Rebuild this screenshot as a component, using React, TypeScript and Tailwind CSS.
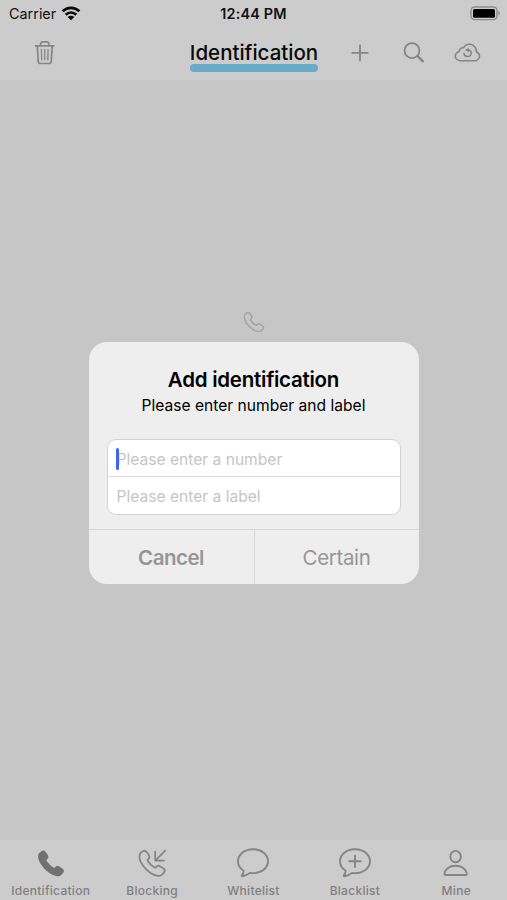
import React from 'react';

const PHONE_PATH =
    'M4.2 .8C5.5 .1 6.7 .5 7.6 1.7L10 5.1C10.9 6.4 10.7 7.4 9.8 8.3L8.8 9.3C8.4 9.7 8.400 10.2 8.700 10.7C9.9 12.9 13.3 16.3 15.6 17.5C16.1 17.8 16.6 17.7 17 17.3L18 16.4C18.9 15.5 19.9 15.4 21.1 16.2L24.8 18.600C26.2 19.6 26.5 20.8 25.6 22.1L24.1 24.1C22.8 25.8 20.6 26.5 18.1 25.9C10.5 24.2 1.9 15.7 .3 8C-.2 5.3 .7 3 2.6 1.700Z';

const BUBBLE_PATH =
    'M17 1.3C25.4 1.3 32 6.4 32 13.200C32 20 25.400 25.100 17 25.100C16 25.100 15 25 14 24.900C11.900 26.700 9.100 28 6.300 28.200C5.700 28.200 5.600 27.700 5.900 27.300C7 26 7.600 24.400 7.600 22.700C4.200 20.500 2 17.200 2 13.200C2 6.400 8.600 1.300 17 1.300Z';

const WifiIcon = () => (
    <svg className="h-[15px] w-[20px]" viewBox="0 0 20 15" fill="none" stroke="#0b0b0b" strokeWidth="2.7">
        <path d="M1.6 5.3C6.4 .6 13.6 .6 18.4 5.3" />
        <path d="M4.7 8.8C7.8 5.9 12.2 5.9 15.3 8.8" />
        <path d="M10 14.2L6.7 11C8.500 9.300 11.500 9.300 13.300 11Z" fill="#0b0b0b" stroke="none" />
    </svg>
);

const BatteryIcon = () => (
    <svg className="h-[15px] w-[32px]" viewBox="0 0 32 15">
        <rect x="2" y="1" width="26" height="12.6" rx="3.6" fill="none" stroke="#8c8c8c" strokeWidth="1.4" />
        <rect x="4" y="2.9" width="22" height="8.900" rx="1.6" fill="#000" />
        <path d="M29.4 5C31.400 6 31.400 8.600 29.400 9.600Z" fill="#8c8c8c" />
    </svg>
);

const TrashIcon = () => (
    <svg className="h-[26px] w-[22px]" viewBox="0 0 22 26" fill="none" stroke="#868686" strokeWidth="1.7" strokeLinecap="round" strokeLinejoin="round">
        <path d="M1.700 5.900H19.800M6.700 5.700V4C6.700 2.700 7.500 1.900 8.800 1.900H12.700C14 1.900 14.800 2.700 14.800 4V5.700" />
        <path d="M3.300 6.100L4.200 21.200C4.300 22.700 5.200 23.500 6.600 23.500H14.900C16.300 23.500 17.200 22.700 17.300 21.200L18.200 6.100" />
        <path d="M7.400 9.300L7.700 19.800M10.750 9.300V19.800M14.100 9.300L13.800 19.800" strokeWidth="1.3" />
    </svg>
);

const PlusIcon = () => (
    <svg className="h-[18px] w-[18px]" viewBox="0 0 18 18" fill="none" stroke="#858585" strokeWidth="1.8" strokeLinecap="round">
        <path d="M9 1.100V16.500M1.300 8.800H16.700" />
    </svg>
);

const SearchIcon = () => (
    <svg className="h-[22px] w-[22px]" viewBox="0 0 22 22" fill="none" stroke="#858585" strokeLinecap="round">
        <circle cx="9" cy="8.6" r="7.5" strokeWidth="1.8" />
        <path d="M14.8 14.300L19.900 19.400" strokeWidth="2.300" />
    </svg>
);

const CloudIcon = () => (
    <svg className="h-[20px] w-[27px]" viewBox="0 0 27 20" fill="none" stroke="#858585" strokeWidth="1.6" strokeLinecap="round" strokeLinejoin="round">
        <path d="M6.700 17.700H20.400C23.400 17.700 25.500 15.700 25.500 13.200C25.500 11.200 24.400 9.700 22.600 9C22.500 4.600 19.500 1.300 15.500 1.300C12.700 1.300 10.700 2.700 9.500 4.800C7.100 4.300 5.300 6 5.100 8.500C2.900 9.300 1.300 11 1.300 13.300C1.300 15.900 3.600 17.700 6.700 17.700Z" />
        <path d="M14.300 6.900C16.300 7.100 17.300 8.700 17.200 10.200C17 12.200 15.500 13.500 13.500 13.500C11.600 13.500 10.100 12.200 10 10.300" strokeWidth="1.500" />
        <path d="M11.200 7.100L14.700 4.700V9.400Z" fill="#858585" stroke="none" />
    </svg>
);

const PhoneFilledIcon = () => (
    <svg className="h-[30px] w-[34px]" viewBox="0 0 34 30">
        <path d={PHONE_PATH} transform="translate(3.9 2.1)" fill="#707070" />
    </svg>
);

const BlockingIcon = () => (
    <svg className="h-[30px] w-[34px]" viewBox="0 0 34 30" fill="none" stroke="#858585" strokeLinecap="round" strokeLinejoin="round">
        <path d={PHONE_PATH} transform="translate(4.2 2.3) scale(.98)" strokeWidth="1.8" />
        <path d="M30.200 2.600L20.200 12.600M20.200 3.700V12.600H29" strokeWidth="1.7" />
    </svg>
);

const BubbleIcon = ({ plus = false }: { plus?: boolean }) => (
    <svg className="h-[30px] w-[34px]" viewBox="0 0 34 30" fill="none" stroke="#858585" strokeWidth="1.9" strokeLinecap="round" strokeLinejoin="round">
        <path d={BUBBLE_PATH} />
        {plus && <path d="M17 7.600V19M11.300 13.300H22.700" />}
    </svg>
);

const PersonIcon = () => (
    <svg className="h-[30px] w-[34px]" viewBox="0 0 34 30" fill="none" stroke="#858585" strokeWidth="1.9" strokeLinejoin="round">
        <ellipse cx="16.6" cy="8.600" rx="5.300" ry="5.700" />
        <path d="M6.600 27C5.700 27 5.300 26.500 5.400 25.600C6 21.200 10.500 17.800 16.600 17.800C22.700 17.800 27.200 21.200 27.800 25.600C27.900 26.500 27.500 27 26.600 27Z" />
    </svg>
);

const tabs = [
    { label: 'Identification', icon: <PhoneFilledIcon /> },
    { label: 'Blocking', icon: <BlockingIcon /> },
    { label: 'Whitelist', icon: <BubbleIcon /> },
    { label: 'Blacklist', icon: <BubbleIcon plus /> },
    { label: 'Mine', icon: <PersonIcon /> },
];

const AddDialog = () => (
    <div className="h-[242px] w-[330px] overflow-hidden rounded-[18px] bg-[#eeeeee] text-black">
        <div className="flex h-[187px] flex-col px-[18px] pt-[25px]">
            <h2 className="text-center text-[20.5px] leading-[26px] font-semibold tracking-[-0.25px]">Add identification</h2>
            <p className="text-center text-[15.6px] leading-[26px]">Please enter number and label</p>
            <div className="mt-5 h-[76px] overflow-hidden rounded-[9px] border border-[#d2d2d2] bg-white text-[15.6px] text-[#c5c5c7]">
                <div className="relative flex h-[37px] items-center border-b border-[#dcdcdc] pt-[4px] pl-[9px]">
                    <span>Please enter a number</span>
                    <span className="absolute top-[8px] left-[8px] h-[22px] w-[3px] rounded-full bg-[#3f66e8]" />
                </div>
                <div className="flex h-[37px] items-center pt-[2px] pl-[9px]">Please enter a label</div>
            </div>
        </div>
        <div className="flex h-[55px] border-t border-[#d8d8d8] text-[20.5px] text-[#969696]">
            <button className="w-[166px] border-r border-[#d8d8d8] pt-[2px] font-semibold tracking-[-0.5px]">Cancel</button>
            <button className="flex-1 pt-[2px] tracking-[-0.35px]">Certain</button>
        </div>
    </div>
);

const App: React.FC = () => (
    <div className="flex h-[900px] w-[507px] flex-col overflow-hidden bg-[#c6c6c6] font-['Inter',sans-serif]">
        <header className="h-20 bg-[#cccccc]">
            <div className="grid h-[27px] grid-cols-3 items-center text-[14.4px] text-[#111]">
                <div className="flex items-center gap-[5px] pl-[9px]">
                    <span>Carrier</span>
                    <WifiIcon />
                </div>
                <div className="text-center font-semibold tracking-[0.2px]">12:44 PM</div>
                <div className="flex justify-end pr-[6px]">
                    <BatteryIcon />
                </div>
            </div>
            <div className="grid h-[51px] grid-cols-[190px_128px_1fr] items-center">
                <div className="pl-[34px]">
                    <TrashIcon />
                </div>
                <div className="flex flex-col items-center pt-[6px]">
                    <h1 className="text-[20.5px] leading-[25px] font-medium whitespace-nowrap text-[#080808]">Identification</h1>
                    <div className="-mt-px h-[8px] w-[128px] rounded-full bg-[#67abc9]" />
                </div>
                <div className="flex items-center pl-[33px]">
                    <PlusIcon />
                    <div className="ml-[34px]">
                        <SearchIcon />
                    </div>
                    <div className="ml-[29px]">
                        <CloudIcon />
                    </div>
                </div>
            </div>
        </header>

        <main className="flex flex-1 flex-col items-center pt-[231px]">
            <svg className="h-[22px] w-[22px]" viewBox="-1.5 -1.5 29.5 29.5" fill="none" stroke="#a3a3a3" strokeWidth="1.9">
                <path d={PHONE_PATH} />
            </svg>
            <div className="mt-[9px]">
                <AddDialog />
            </div>
        </main>

        <nav className="grid h-[60px] grid-cols-5 bg-[#cccccc]">
            {tabs.map((tab) => (
                <div key={tab.label} className="flex flex-col items-center pt-[8px]">
                    {tab.icon}
                    <span className="mt-[5px] text-[12px] leading-4 font-medium tracking-[0.28px] text-[#808080]">{tab.label}</span>
                </div>
            ))}
        </nav>
    </div>
);

export default App;
